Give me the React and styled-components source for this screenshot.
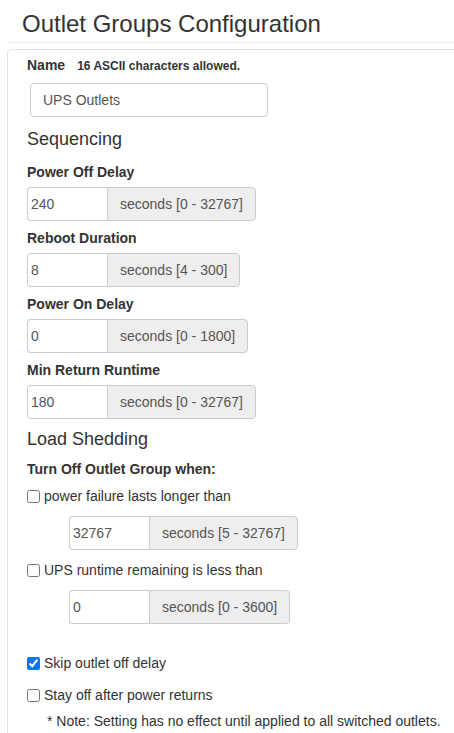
import styled, { createGlobalStyle } from 'styled-components';

const GlobalStyle = createGlobalStyle`
  body {
    margin: 0;
    font-family: 'Liberation Sans', Arial, sans-serif;
    font-size: 14px;
    color: #333;
    background: #fff;
  }
  * { box-sizing: border-box; }
`;

const Page = styled.div`
  width: 454px;
  height: 733px;
  overflow: hidden;
`;

const Header = styled.div`
  margin-left: 7px;
  padding: 9px 0 0 15px;
  height: 43px;
  border-bottom: 1px solid #eee;
`;

const Title = styled.h1`
  margin: 0;
  font-size: 24px;
  font-weight: 400;
  line-height: 30px;
  color: #333;
`;

const Panel = styled.div`
  margin: 6px -10px 0 7px;
  border: 1px solid #e3e3e3;
  border-radius: 4px;
  padding: 5px 0 40px 19px;
`;

const NameRow = styled.div`
  display: flex;
  align-items: baseline;
  gap: 12px;
  line-height: 20px;
`;

const Label = styled.div`
  font-weight: 700;
  font-size: 14px;
  line-height: 20px;
  margin: ${p => p.$m || '0 0 5px'};
`;

const Hint = styled.span`
  font-weight: 700;
  font-size: 12px;
`;

const TextInput = styled.input`
  display: block;
  margin: 7px 0 0 3px;
  width: 238px;
  height: 34px;
  padding: 6px 12px;
  font-family: inherit;
  font-size: 14px;
  color: #555;
  border: 1px solid #ccc;
  border-radius: 4px;
`;

const Section = styled.h3`
  margin: ${p => p.$m || '10px 0 11px'};
  font-size: 18px;
  font-weight: 400;
  line-height: 24px;
  color: #333;
`;

const Group = styled.div`
  display: flex;
  height: 34px;
  margin: ${p => p.$m || '0 0 7px'};
`;

const GroupInput = styled.input`
  width: 80px;
  height: 34px;
  padding: 6px 3px;
  font-family: inherit;
  font-size: 14px;
  color: #555;
  border: 1px solid #ccc;
  border-right: none;
  border-radius: 4px 0 0 4px;
`;

const Addon = styled.span`
  display: flex;
  align-items: center;
  padding: 0 12px;
  font-size: 14px;
  color: #555;
  background: #eee;
  border: 1px solid #ccc;
  border-radius: 0 4px 4px 0;
`;

const Check = styled.label`
  display: flex;
  align-items: center;
  gap: 4px;
  height: 20px;
  line-height: 20px;
  margin: ${p => p.$m || '0'};
`;

const Box = styled.input`
  width: 13px;
  height: 13px;
  margin: 0;
  accent-color: #0b75f0;
`;

const Note = styled.div`
  padding-left: 20px;
  line-height: 20px;
  margin-top: 6px;
`;

const NumberGroup = ({ value, range, m }) => (
  <Group $m={m}>
    <GroupInput defaultValue={value} />
    <Addon>seconds [{range}]</Addon>
  </Group>
);

export default function App() {
  return (
    <Page>
      <GlobalStyle />
      <Header>
        <Title>Outlet Groups Configuration</Title>
      </Header>
      <Panel>
        <NameRow>
          <Label $m="0">Name</Label>
          <Hint>16 ASCII characters allowed.</Hint>
        </NameRow>
        <TextInput defaultValue="UPS Outlets" />

        <Section>Sequencing</Section>
        <Label>Power Off Delay</Label>
        <NumberGroup value="240" range="0 - 32767" />
        <Label>Reboot Duration</Label>
        <NumberGroup value="8" range="4 - 300" />
        <Label>Power On Delay</Label>
        <NumberGroup value="0" range="0 - 1800" />
        <Label>Min Return Runtime</Label>
        <NumberGroup value="180" range="0 - 32767" m="0 0 8px" />

        <Section $m="0 0 8px">Load Shedding</Section>
        <Label $m="0 0 7px">Turn Off Outlet Group when:</Label>
        <Check>
          <Box type="checkbox" />
          power failure lasts longer than
        </Check>
        <NumberGroup value="32767" range="5 - 32767" m="10px 0 10px 42px" />
        <Check>
          <Box type="checkbox" />
          UPS runtime remaining is less than
        </Check>
        <NumberGroup value="0" range="0 - 3600" m="10px 0 0 42px" />

        <Check $m="29px 0 0">
          <Box type="checkbox" defaultChecked />
          Skip outlet off delay
        </Check>
        <Check $m="12px 0 0">
          <Box type="checkbox" />
          Stay off after power returns
        </Check>
        <Note>* Note: Setting has no effect until applied to all switched outlets.</Note>
      </Panel>
    </Page>
  );
}
